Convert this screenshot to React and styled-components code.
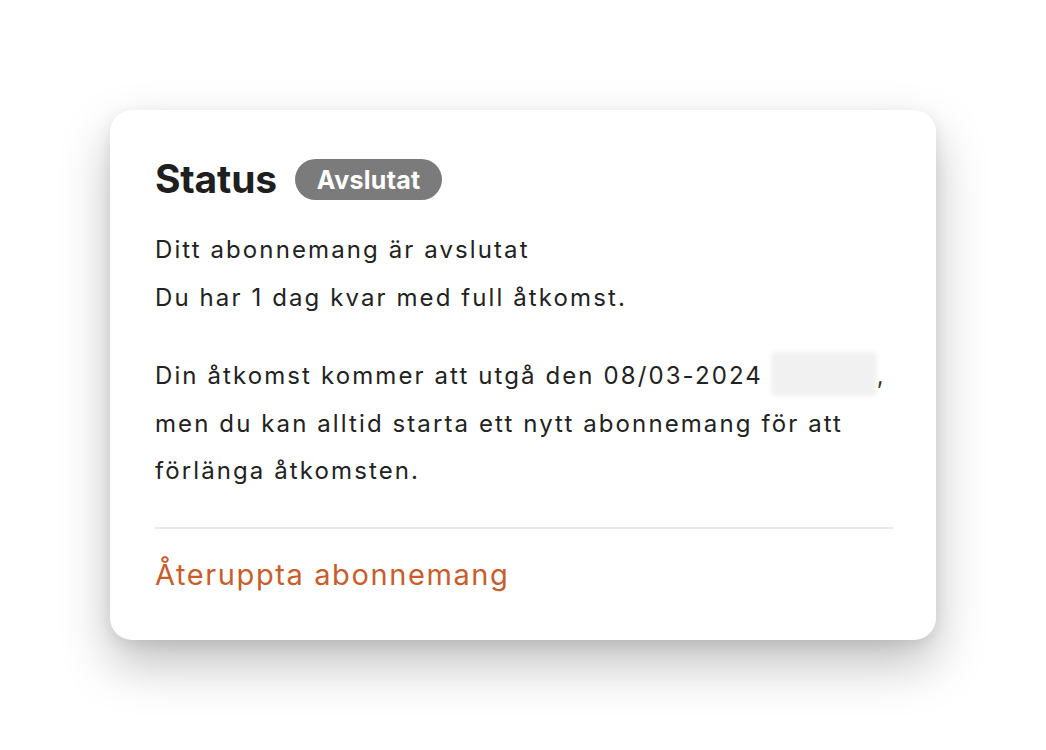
import styled, { createGlobalStyle } from "styled-components";

const GlobalStyle = createGlobalStyle`
  html, body {
    margin: 0;
    padding: 0;
    background: #ffffff;
  }
  body {
    font-family: Inter, "Noto Sans", "Liberation Sans", sans-serif;
    -webkit-font-smoothing: antialiased;
  }
`;

const Page = styled.div`
  width: 1046px;
  height: 750px;
  padding: 110px 0 0 110px;
  box-sizing: border-box;
`;

const Card = styled.div`
  width: 826px;
  height: 530px;
  box-sizing: border-box;
  background: #ffffff;
  border-radius: 22px;
  padding: 40px 43px 0 45px;
  box-shadow: 0 24px 50px rgba(0, 0, 0, 0.25), 0 4px 14px rgba(0, 0, 0, 0.08);
  display: flex;
  flex-direction: column;
`;

const Header = styled.div`
  display: flex;
  align-items: center;
  gap: 18px;
`;

const Title = styled.h2`
  margin: 0;
  font-size: 39px;
  font-weight: 700;
  color: #1f1f1f;
  letter-spacing: -0.2px;
  line-height: 58px;
`;

const Badge = styled.span`
  display: inline-flex;
  align-items: center;
  height: 41px;
  padding: 0 21px 0 22px;
  border-radius: 21px;
  background: #7b7b7b;
  color: #ffffff;
  font-size: 25px;
  font-weight: 700;
  letter-spacing: 0.3px;
  margin-top: 1px;
`;

const Text = styled.p`
  margin: ${p => p.$top || 0}px 0 0;
  font-size: 24px;
  line-height: 47.5px;
  letter-spacing: 2.1px;
  color: #222222;
`;

const Hidden = styled.span`
  display: inline-block;
  width: 106px;
  height: 44px;
  vertical-align: middle;
  margin: -6px 0 0 8px;
  background: #f1f1f1;
  filter: blur(2px);
  border-radius: 4px;
`;

const Divider = styled.hr`
  margin: 32px 0 0;
  border: none;
  height: 2px;
  background: #e8e8e8;
`;

const Link = styled.a`
  margin-top: 22px;
  font-size: 29px;
  line-height: 48px;
  letter-spacing: 1.6px;
  color: #c75d2c;
  cursor: pointer;
  align-self: flex-start;
`;

export default function App() {
  return (
    <>
      <GlobalStyle />
      <Page>
        <Card>
          <Header>
            <Title>Status</Title>
            <Badge>Avslutat</Badge>
          </Header>
          <Text $top={18}>
            Ditt abonnemang är avslutat
            <br />
            Du har 1 dag kvar med full åtkomst.
          </Text>
          <Text $top={31}>
            Din åtkomst kommer att utgå den 08/03-2024<Hidden />,
            <br />
            men du kan alltid starta ett nytt abonnemang för att
            <br />
            förlänga åtkomsten.
          </Text>
          <Divider />
          <Link>Återuppta abonnemang</Link>
        </Card>
      </Page>
    </>
  );
}
